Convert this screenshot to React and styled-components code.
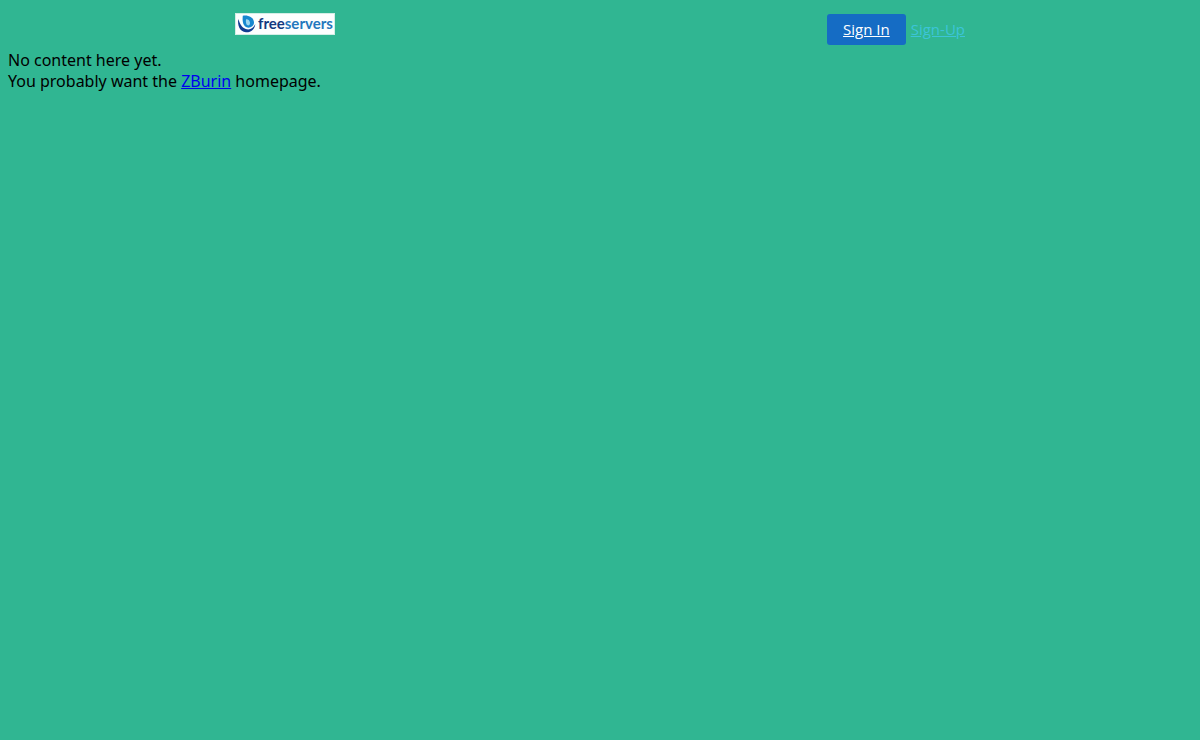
import React from "react";
import styled, { createGlobalStyle } from "styled-components";

const GlobalStyle = createGlobalStyle`
  body {
    margin: 0;
    background: #30b692;
    color: #000;
    font-family: "Noto Sans", "Open Sans", sans-serif;
  }
`;

const HostBar = styled.header`
  display: flex;
  align-items: flex-start;
  justify-content: space-between;
  max-width: 730px;
  margin: 0 auto;
  padding: 13px 8px 5px;
`;

const LogoLink = styled.a`
  display: block;
  line-height: 0;
`;

const AccountNav = styled.nav`
  display: flex;
  align-items: center;
  gap: 5px;
  padding-top: 1px;
  font-family: "Open Sans", "Noto Sans", sans-serif;
  font-size: 15px;
  line-height: 31px;
`;

const SignInLink = styled.a`
  padding: 0 16px;
  border-radius: 3px;
  background: #156cc4;
  color: #fff;
`;

const SignUpLink = styled.a`
  color: #3cc4d8;
`;

const Message = styled.main`
  padding: 0 8px;
  font-size: 16px;
  line-height: 21px;
`;

const Line = styled.p`
  margin: 0;
`;

const HomeLink = styled.a`
  color: #0000ee;
`;

function Logo() {
  return (
    <svg width="100" height="22" viewBox="0 0 100 22" role="img" aria-label="freeservers">
      <rect x="0.5" y="0.5" width="99" height="21" fill="#fcfefe" stroke="#d3eee6" />
      <path d="M3.2 6C2.4 12 4.5 18.8 11 19.3C16 19.6 20 16 20.3 11C18.5 15.5 14.5 17.3 10.8 16C6.5 14.5 5.2 11 3.2 6Z" fill="#123c91" />
      <path d="M7.8 2.8C12 1.6 19 4.2 19 9.6C19 13.2 15.3 15.2 12.3 14.6C8.5 13.8 7 9 7.8 2.8Z" fill="#1787cf" />
      <path d="M11 6.2C13.5 6 15.3 8 15 10.5C14.8 12 13.6 12.7 12.6 12.3C10.9 11.6 10.7 9 11 6.2Z" fill="#9bd5ef" />
      <text x="23" y="16" fontFamily="Lato, 'Noto Sans', sans-serif" fontSize="15" fontWeight="700" fill="#14397f">
        free<tspan fill="#2478bd">servers</tspan>
      </text>
    </svg>
  );
}

export default function App() {
  return (
    <>
      <GlobalStyle />
      <HostBar>
        <LogoLink href="#freeservers"><Logo /></LogoLink>
        <AccountNav aria-label="Account">
          <SignInLink href="#signin">Sign In</SignInLink>
          <SignUpLink href="#signup">Sign-Up</SignUpLink>
        </AccountNav>
      </HostBar>
      <Message>
        <Line>No content here yet.</Line>
        <Line>You probably want the <HomeLink href="#zburin">ZBurin</HomeLink> homepage.</Line>
      </Message>
    </>
  );
}
